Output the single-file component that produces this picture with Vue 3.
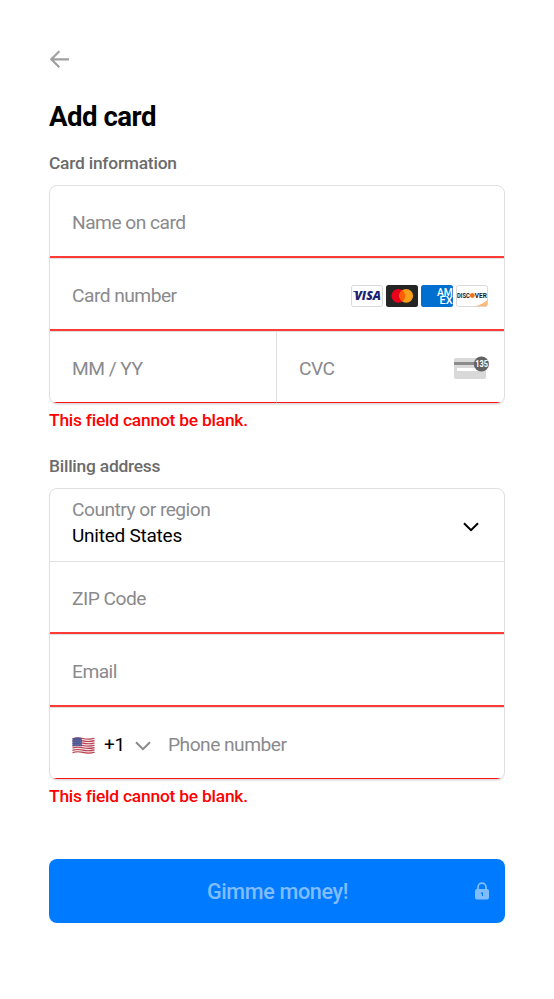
<script setup>
const stripes = [0, 1, 2, 3, 4, 5, 6]
</script>

<template>
  <main class="page">
    <svg class="back" width="22" height="20" viewBox="0 0 22 20"><path d="M10.3 2.3 2.3 10.3l8 8M2.5 10.3H20" /></svg>
    <h1>Add card</h1>

    <h2>Card information</h2>
    <section class="group">
      <div class="row error"><span class="hint name">Name on card</span></div>
      <div class="row error">
        <span class="hint number">Card number</span>
        <div class="brands">
          <svg width="32" height="22" viewBox="0 0 32 22">
            <rect x=".5" y=".5" width="31" height="21" rx="2" fill="#fff" stroke="#d9d9d9" />
            <text x="3.4" y="15" textLength="26.6" lengthAdjust="spacingAndGlyphs" font-size="12" font-weight="800" font-style="italic" fill="#1a1f71" font-family="Open Sans, sans-serif">VISA</text>
            <path d="M2 6.3h4l1.4 3.2Q5.5 7 2 6.7z" fill="#1a1f71" />
          </svg>
          <svg width="32" height="22" viewBox="0 0 32 22">
            <rect width="32" height="22" rx="2.5" fill="#252525" />
            <circle cx="12.3" cy="10.8" r="6.9" fill="#eb001b" />
            <circle cx="20.2" cy="10.8" r="6.9" fill="#f79e1b" />
            <path d="M16.25 5.15a6.9 6.9 0 0 1 0 11.3 6.9 6.9 0 0 1 0-11.3z" fill="#ff5f00" />
          </svg>
          <svg width="32" height="22" viewBox="0 0 32 22">
            <rect width="32" height="22" rx="2.5" fill="#016fd0" />
            <g fill="#fff" font-family="Roboto, sans-serif" font-weight="500" font-size="10">
              <text x="16" y="10.7" textLength="15.8" lengthAdjust="spacingAndGlyphs">AM</text>
              <text x="18.6" y="18.6" textLength="13.2" lengthAdjust="spacingAndGlyphs">EX</text>
            </g>
          </svg>
          <svg width="32" height="22" viewBox="0 0 32 22">
            <rect x=".5" y=".5" width="31" height="21" rx="2" fill="#fff" stroke="#d9d9d9" />
            <path d="M18 21.3Q26 20 31.3 15v4.5a1.8 1.8 0 0 1-1.8 1.8z" fill="#fdb97d" />
            <g font-family="Roboto, sans-serif" font-weight="700" font-size="6.3" fill="#151515">
              <text x="1" y="12.8" textLength="12.8" lengthAdjust="spacingAndGlyphs">DISC</text>
              <text x="18.8" y="12.8" textLength="12" lengthAdjust="spacingAndGlyphs">VER</text>
            </g>
            <circle cx="16.3" cy="10.5" r="2.4" fill="#f47216" />
          </svg>
        </div>
      </div>
      <div class="row split">
        <div class="cell last"><span class="hint expiry">MM / YY</span></div>
        <div class="cell last cvc">
          <span class="hint">CVC</span>
          <svg class="code" width="36" height="24" viewBox="0 0 36 24">
            <rect y="2" width="32" height="21" rx="2" fill="#d9d9d9" />
            <path d="M0 6h32v3H0z" fill="#8c8c8c" />
            <path d="M3 12h24v3H3z" fill="#fff" />
            <circle cx="27.4" cy="8" r="7.6" fill="#626262" />
            <text x="21.2" y="10.9" textLength="12.8" lengthAdjust="spacingAndGlyphs" font-family="Roboto, sans-serif" font-weight="700" font-size="8.4" fill="#fff">135</text>
          </svg>
        </div>
      </div>
    </section>
    <p class="message">This field cannot be blank.</p>

    <h2 class="billing">Billing address</h2>
    <section class="group address">
      <div class="row country">
        <div class="choice">
          <span class="hint region">Country or region</span>
          <span class="value">United States</span>
        </div>
        <svg class="chevron" width="16" height="10" viewBox="0 0 16 10"><path d="m1 1.2 7 7 7-7" /></svg>
      </div>
      <div class="row error"><span class="hint">ZIP Code</span></div>
      <div class="row error"><span class="hint">Email</span></div>
      <div class="row last phone">
        <svg class="flag" width="23" height="18" viewBox="0 0 23 18">
          <path d="M.5 2Q5 .3 11 1.7T22.5 1.5V16Q17 17.2 11 16.2T.5 16.3z" fill="#f2e6e8" />
          <path v-for="n in stripes" :key="n" :transform="`translate(0 ${n * 2.32})`" d="M.5 1.8Q5 .1 11 1.5T22.5 1.3" fill="none" stroke="#bd3f50" stroke-width="1.15" />
          <path d="M.5 1.5Q5-.2 9.8.9v8.3Q5 8.2.5 9.6z" fill="#4e5795" />
          <path d="M1.5 3.2h8M1.5 5.4h8M1.5 7.6h8" stroke="#9197bf" stroke-width=".6" stroke-dasharray=".7 1" />
        </svg>
        <span class="prefix">+1</span>
        <svg class="chevron muted" width="16" height="10" viewBox="0 0 16 10"><path d="m1 1.2 7 7 7-7" /></svg>
        <span class="hint tel">Phone number</span>
      </div>
    </section>
    <p class="message">This field cannot be blank.</p>

    <button class="submit" type="button">
      <span>Gimme money!</span>
      <svg class="lock" width="14" height="18" viewBox="0 0 14 18">
        <path d="M3 8V5.2a4 4 0 0 1 8 0V8" fill="none" stroke="#80bdff" stroke-width="1.8" />
        <rect y="7" width="14" height="10.4" rx="2" fill="#80bdff" />
        <path d="M6 10.5h2V14H7v-2H6z" fill="#007aff" />
      </svg>
    </button>
  </main>
</template>

<style>
body {
  background: #fff;
}
</style>

<style scoped>
* {
  box-sizing: border-box;
}
.page {
  width: 554px;
  height: 999px;
  padding: 49px 49px 0;
  font-family: Roboto, sans-serif;
  color: #000;
}
svg {
  display: block;
  flex: none;
}
.back path {
  fill: none;
  stroke: #a0a0a0;
  stroke-width: 2.2;
}
h1 {
  margin: 31px 0 0;
  font-size: 27.6px;
  line-height: 34px;
  font-weight: 700;
  letter-spacing: -0.5px;
}
h2 {
  margin: 18px 0 11px;
  font-size: 17.4px;
  line-height: 22px;
  font-weight: 500;
  letter-spacing: -0.23px;
  color: #6b6b6b;
}
h2.billing {
  margin-top: 23px;
}
.group {
  height: 219px;
  border: 1px solid #e0e0e0;
  border-radius: 8px;
  box-shadow: 0 1px 1px #0000001a;
  overflow: hidden;
}
.group.address {
  height: 292px;
}
.row {
  display: flex;
  align-items: center;
  height: 73px;
  padding: 2px 16px 0 22px;
  border-bottom: 1px solid #e0e0e0;
}
.row:last-child {
  height: 71px;
}
.error {
  box-shadow: inset 0 -2px #ff3b38;
}
.last,
.row.last {
  border-bottom: 1px solid #ff1010;
}
.hint {
  font-size: 19.2px;
  line-height: 24px;
  letter-spacing: -0.52px;
  color: #8a8a8d;
  white-space: nowrap;
}
.brands {
  display: flex;
  gap: 3px;
  margin-left: auto;
}
.row.split {
  padding: 0;
  border: 0;
}
.cell {
  display: flex;
  align-items: center;
  width: 226px;
  height: 100%;
  padding: 3px 15px 0 22px;
}
.cell.cvc {
  width: 228px;
  padding-right: 14px;
  border-left: 1px solid #e0e0e0;
}
.code {
  margin: -1px 0 0 auto;
}
.message {
  margin: 4px 0 0;
  font-size: 17.4px;
  line-height: 24px;
  font-weight: 500;
  letter-spacing: -0.22px;
  color: #f00;
}
.row.country {
  padding: 0 25px 3px 22px;
}
.choice {
  display: flex;
  flex-direction: column;
}
.value {
  font-size: 19px;
  line-height: 28px;
  letter-spacing: -0.24px;
}
.country .chevron {
  margin: 7px 0 0 auto;
}
.chevron path {
  fill: none;
  stroke: #000;
  stroke-width: 2;
}
.chevron.muted path {
  stroke: #8a8a8d;
}
.row.phone {
  padding-top: 3px;
}
.flag,
.muted {
  margin-top: 2px;
}
.prefix {
  width: 22px;
  margin-left: 9px;
  font-size: 19px;
  letter-spacing: -0.3px;
}
.muted {
  margin-left: 9px;
}
.tel {
  margin-left: 17px;
}
.submit {
  display: flex;
  position: relative;
  align-items: center;
  justify-content: center;
  width: 100%;
  height: 64px;
  margin-top: 51px;
  padding: 2px 0 0 1px;
  border: 0;
  border-radius: 8px;
  background: #007aff;
  color: #80bdff;
  font: 500 21.6px/28px Roboto, sans-serif;
  letter-spacing: -0.36px;
}
.lock {
  position: absolute;
  right: 16px;
  top: 23px;
}
</style>
